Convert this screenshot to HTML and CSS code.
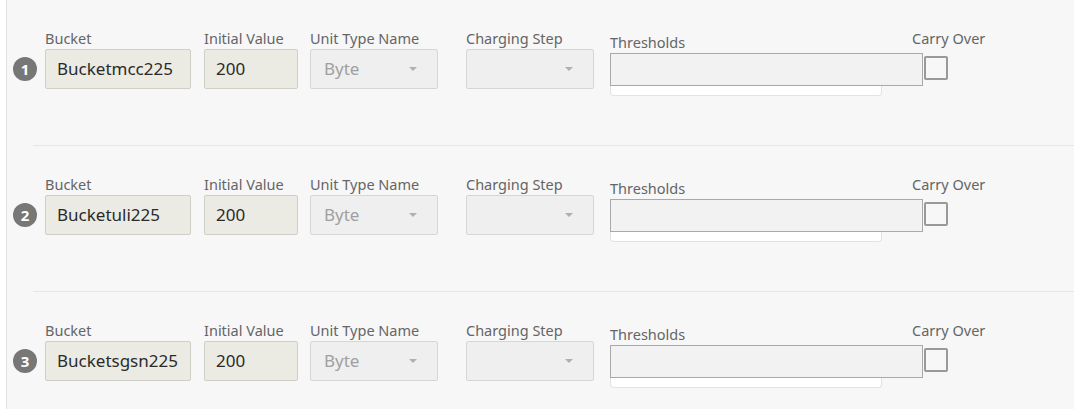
FILE: index.html
```html
<!DOCTYPE html>
<html>
<head>
<meta charset="utf-8">
<link rel="stylesheet" href="styles.css">
</head>
<body>
<div class="panel">
  <div class="row">
    <div class="badge">1</div>
    <div class="field f-bucket"><label>Bucket</label><div class="input">Bucketmcc225</div></div>
    <div class="field f-init"><label>Initial Value</label><div class="input">200</div></div>
    <div class="field f-unit"><label>Unit Type Name</label><div class="select"><span>Byte</span><i class="caret"></i></div></div>
    <div class="field f-step"><label>Charging Step</label><div class="select"><span></span><i class="caret"></i></div></div>
    <div class="field f-thr"><label>Thresholds</label><div class="thr"><div class="thr-box"></div><div class="thr-foot"></div></div></div>
    <div class="field f-carry"><label>Carry Over</label><div class="check"></div></div>
  </div>
  <hr class="sep">
  <div class="row">
    <div class="badge">2</div>
    <div class="field f-bucket"><label>Bucket</label><div class="input">Bucketuli225</div></div>
    <div class="field f-init"><label>Initial Value</label><div class="input">200</div></div>
    <div class="field f-unit"><label>Unit Type Name</label><div class="select"><span>Byte</span><i class="caret"></i></div></div>
    <div class="field f-step"><label>Charging Step</label><div class="select"><span></span><i class="caret"></i></div></div>
    <div class="field f-thr"><label>Thresholds</label><div class="thr"><div class="thr-box"></div><div class="thr-foot"></div></div></div>
    <div class="field f-carry"><label>Carry Over</label><div class="check"></div></div>
  </div>
  <hr class="sep">
  <div class="row">
    <div class="badge">3</div>
    <div class="field f-bucket"><label>Bucket</label><div class="input">Bucketsgsn225</div></div>
    <div class="field f-init"><label>Initial Value</label><div class="input">200</div></div>
    <div class="field f-unit"><label>Unit Type Name</label><div class="select"><span>Byte</span><i class="caret"></i></div></div>
    <div class="field f-step"><label>Charging Step</label><div class="select"><span></span><i class="caret"></i></div></div>
    <div class="field f-thr"><label>Thresholds</label><div class="thr"><div class="thr-box"></div><div class="thr-foot"></div></div></div>
    <div class="field f-carry"><label>Carry Over</label><div class="check"></div></div>
  </div>
</div>
</body>
</html>
```

FILE: styles.css
```css
html, body {
  margin: 0;
  padding: 0;
  background: #ffffff;
  font-family: "Noto Sans", "Open Sans", sans-serif;
}
.panel {
  margin-left: 6px;
  border-left: 1px solid #e2e2e2;
  background: #f7f7f7;
  height: 409px;
  overflow: hidden;
}
.row {
  height: 145px;
  box-sizing: border-box;
  padding: 30px 0 0 6px;
  display: flex;
  align-items: flex-start;
}
.sep {
  margin: 0 0 0 26px;
  border: 0;
  height: 1px;
  background: #e6e6e6;
}
.badge {
  width: 24px;
  height: 24px;
  margin-top: 27px;
  border-radius: 50%;
  background: #777777;
  color: #ffffff;
  font-size: 15px;
  font-weight: 700;
  line-height: 24px;
  text-align: center;
  flex: none;
}
.field {
  display: flex;
  flex-direction: column;
  flex: none;
}
.field label {
  font-size: 14.5px;
  line-height: 16px;
  height: 16px;
  color: #656565;
  margin-bottom: 3px;
  white-space: nowrap;
}
.input, .select {
  box-sizing: border-box;
  height: 40px;
  border-radius: 2px;
  font-size: 17px;
  line-height: 38px;
  padding: 0 11px;
}
.input {
  background: #ebebe4;
  border: 1px solid #cfcfc8;
  color: #2a2a2a;
}
.select {
  background: #efefef;
  border: 1px solid #d6d6d6;
  color: #a0a0a0;
  display: flex;
  justify-content: space-between;
  align-items: center;
  padding-left: 13px;
  padding-right: 20px;
}
.caret {
  width: 0;
  height: 0;
  border-left: 4px solid transparent;
  border-right: 4px solid transparent;
  border-top: 4px solid #b0b0b0;
}
.f-bucket { margin-left: 8px; width: 146px; }
.f-init { margin-left: 13px; width: 94px; }
.f-unit { margin-left: 12px; width: 128px; }
.f-step { margin-left: 28px; width: 128px; }
.f-thr { margin-left: 16px; width: 313px; padding-top: 4px; }
.f-thr label { margin-bottom: 3px; }
.thr { position: relative; }
.thr-box {
  box-sizing: border-box;
  height: 33px;
  background: #f2f2f2;
  border: 1px solid #a9a9a9;
}
.thr-foot {
  box-sizing: border-box;
  width: 272px;
  height: 10px;
  background: #ffffff;
  border: 1px solid #e2e2e2;
  border-top: 0;
  border-radius: 0 0 4px 4px;
}
.f-carry {
  margin-left: -11px;
  width: 90px;
}
.f-carry label { margin-bottom: 10px; }
.check {
  margin-left: 12px;
  box-sizing: border-box;
  width: 24px;
  height: 24px;
  border: 2px solid #999999;
  border-radius: 2px;
  background: #f7f7f7;
}
```
